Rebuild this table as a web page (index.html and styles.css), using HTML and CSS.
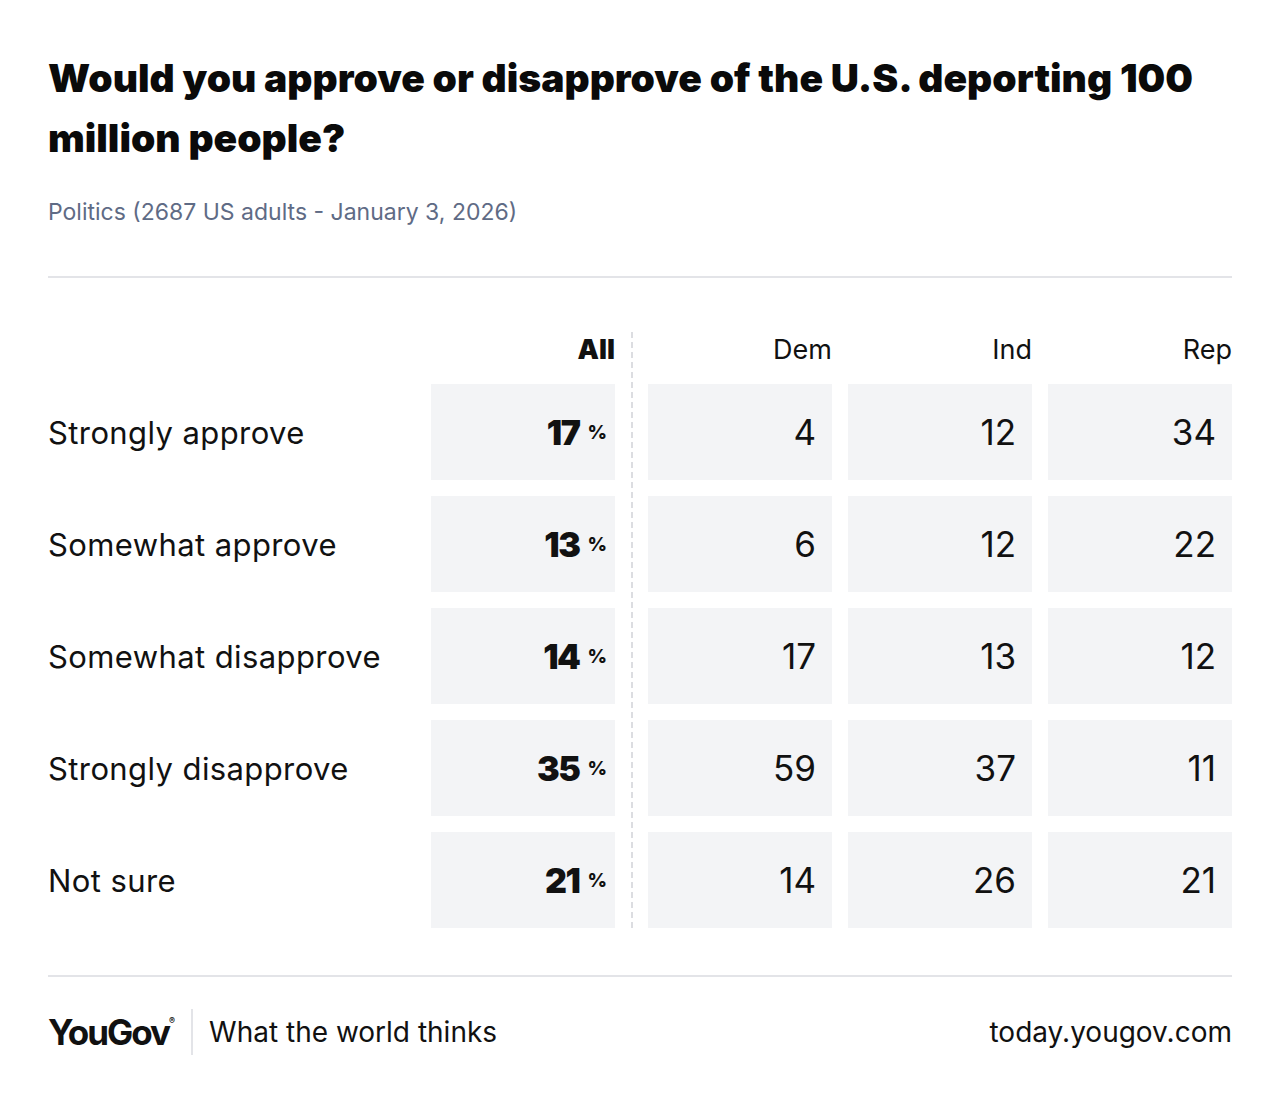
FILE: index.html
```html
<!DOCTYPE html>
<html lang="en">
<head>
<meta charset="utf-8">
<title>YouGov poll</title>
<link rel="stylesheet" href="styles.css">
</head>
<body>
<main class="card">
  <h1 class="title">Would you approve or disapprove of the U.S. deporting 100 million people?</h1>
  <p class="subtitle">Politics (2687 US adults - January 3, 2026)</p>
  <hr class="rule">
  <section class="table">
    <div class="divider"></div>
    <div class="head-label"></div>
    <div class="head head-all">All</div>
    <div class="head">Dem</div>
    <div class="head">Ind</div>
    <div class="head">Rep</div>

    <div class="label">Strongly approve</div>
    <div class="cell cell-all"><span class="num">17</span><span class="pct">%</span></div>
    <div class="cell">4</div><div class="cell">12</div><div class="cell">34</div>

    <div class="label">Somewhat approve</div>
    <div class="cell cell-all"><span class="num">13</span><span class="pct">%</span></div>
    <div class="cell">6</div><div class="cell">12</div><div class="cell">22</div>

    <div class="label">Somewhat disapprove</div>
    <div class="cell cell-all"><span class="num">14</span><span class="pct">%</span></div>
    <div class="cell">17</div><div class="cell">13</div><div class="cell">12</div>

    <div class="label">Strongly disapprove</div>
    <div class="cell cell-all"><span class="num">35</span><span class="pct">%</span></div>
    <div class="cell">59</div><div class="cell">37</div><div class="cell">11</div>

    <div class="label">Not sure</div>
    <div class="cell cell-all"><span class="num">21</span><span class="pct">%</span></div>
    <div class="cell">14</div><div class="cell">26</div><div class="cell">21</div>
  </section>
  <hr class="rule rule-bottom">
  <footer class="footer">
    <div class="brand">
      <span class="logo">YouGov<sup class="reg">®</sup></span>
      <span class="sep"></span>
      <span class="tagline">What the world thinks</span>
    </div>
    <span class="site">today.yougov.com</span>
  </footer>
</main>
</body>
</html>
```
FILE: styles.css
```css
* { box-sizing: border-box; }
html, body { margin: 0; padding: 0; background: #ffffff; }
body {
  font-family: Inter, "Liberation Sans", sans-serif;
  color: #111111;
}
.card {
  width: 1280px;
  padding: 48px 48px 0 48px;
}
.title {
  margin: 0;
  font-size: 39px;
  line-height: 60px;
  font-weight: 900;
  letter-spacing: 0;
  color: #0a0a0a;
}
.subtitle {
  margin: 30px 0 0 0;
  font-size: 23px;
  line-height: 28px;
  color: #5f6b85;
}
.rule {
  border: 0;
  height: 2px;
  background: #e3e4e8;
  margin: 50px 0 0 0;
}
.rule-bottom { margin-top: 47px; }
.table {
  display: grid;
  grid-template-columns: 1fr 184px 1px 184px 184px 184px;
  column-gap: 16px;
  row-gap: 16px;
  grid-auto-rows: 96px;
  grid-template-rows: 24px;
  margin-top: 66px;
}
.divider {
  grid-column: 3;
  grid-row: 1 / 7;
  border-left: 2px dashed #dcdde1;
  margin-top: -12px;
}
.head-label { grid-column: 1; grid-row: 1; }
.head {
  font-size: 27px;
  line-height: 24px;
  text-align: right;
  color: #111;
  position: relative;
  top: -6px;
}
.head-all { grid-column: 2; font-weight: 900; }
.head:nth-child(4) { grid-column: 4; }
.label {
  grid-column: 1;
  display: flex;
  align-items: center;
  font-size: 31px;
  letter-spacing: 0.4px;
  color: #111;
}
.cell {
  background: #f3f4f6;
  display: flex;
  align-items: center;
  justify-content: flex-end;
  padding-right: 16px;
  font-size: 35px;
  color: #111;
}
.cell-all { grid-column: 2; padding-right: 8px; }
.cell-all + .cell { grid-column: 4; }
.num { font-weight: 900; font-size: 34px; letter-spacing: -1.5px; }
.pct { font-weight: 800; font-size: 19px; margin-left: 8px; }
.footer {
  display: flex;
  justify-content: space-between;
  align-items: center;
  margin-top: 31px;
  height: 48px;
}
.brand { display: flex; align-items: center; }
.logo {
  font-size: 35px;
  font-weight: 700;
  letter-spacing: -2px;
  color: #111;
}
.reg { font-size: 9px; vertical-align: top; position: relative; top: 4px; letter-spacing: 0; }
.sep {
  width: 2px;
  height: 46px;
  background: #e3e4e8;
  margin: 0 16px 0 16px;
}
.tagline { font-size: 28px; color: #111; }
.site { font-size: 28px; color: #111; }
```
